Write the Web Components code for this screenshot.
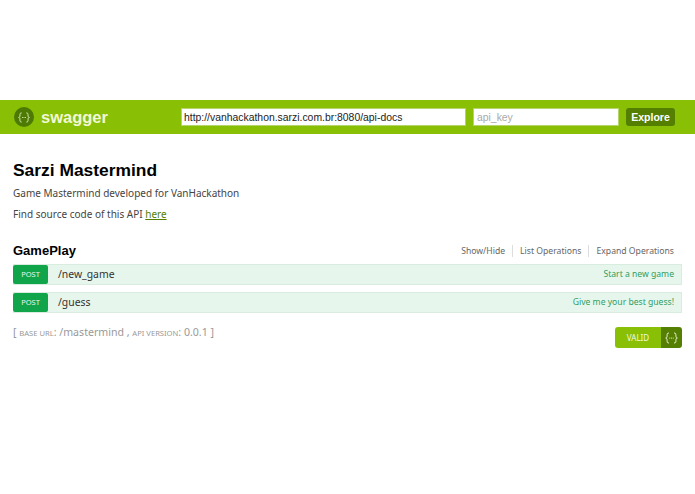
<!DOCTYPE html>
<html><head><meta charset="utf-8"><title>Swagger UI</title>
<style>
html,body{margin:0;padding:0;background:#fff}
body{font-family:"Noto Sans","Open Sans",sans-serif;color:#333}
api-info p{margin:0 0 6px;font:400 10px/15px "Noto Sans",sans-serif;color:#444}
api-info a{color:#547f00}
</style></head>
<body>
<swagger-app>
  <swagger-header slot="header"></swagger-header>
  <api-info title-text="Sarzi Mastermind">
    <p>Game Mastermind developed for VanHackathon</p>
    <p>Find source code of this API <a href="#">here</a></p>
  </api-info>
  <api-resource name="GamePlay">
    <api-op path="/new_game" summary="Start a new game"></api-op>
    <api-op path="/guess" summary="Give me your best guess!"></api-op>
  </api-resource>
  <api-footer></api-footer>
</swagger-app>
<script>
const braceSvg=(c,w,h)=>`<svg width="${w}" height="${h}" viewBox="0 0 14 12" fill="none" stroke="${c}" stroke-width="1" stroke-linecap="round"><path d="M4 1C2.6 1 2.6 2 2.6 3.5S2.4 5.7 1.2 6C2.4 6.3 2.6 7 2.6 8.5S2.6 11 4 11M10 1c1.4 0 1.4 1 1.4 2.5S11.6 5.7 12.8 6c-1.2.3-1.4 1-1.4 2.5S11.4 11 10 11"/><path d="M5.3 6h.01M7 6h.01M8.7 6h.01" stroke-width="1.1"/></svg>`;
function def(name,html){
  customElements.define(name,class extends HTMLElement{
    constructor(){super();this.attachShadow({mode:'open'});if(typeof html!=='function')this.shadowRoot.innerHTML=html;}
    connectedCallback(){if(typeof html==='function')this.shadowRoot.innerHTML=html(this);}
  });
}
def('swagger-app',`<style>:host{display:block;padding-top:100px}
.w{padding:0 13px}</style>
<slot name="header"></slot><div class="w"><slot></slot></div>`);
def('swagger-header',`<style>
:host{display:flex;align-items:center;height:34px;background:#89bf04}
.logo{width:20px;height:20px;border-radius:50%;background:#4c7a02;display:flex;align-items:center;justify-content:center;margin-left:14px;flex:none}
.name{font:700 16.5px "Liberation Sans",sans-serif;color:#f2f8d8;margin-left:7px;width:67px;flex:none;white-space:nowrap}
input{box-sizing:border-box;height:18px;border:1px solid #b5d46b;background:#fff;padding:0 2px;font:10.4px "Liberation Sans",sans-serif;color:#222;outline:0;border-radius:0;margin:0;flex:none}
input::placeholder{color:#aaa;opacity:1}
#u{width:285px;margin-left:73px}
#k{width:146px;margin-left:7px;padding-left:3px}
.x{margin-left:7px;width:49px;height:18px;border-radius:3px;background:#547f00;color:#fff;font:700 10.5px "Liberation Sans",sans-serif;display:flex;align-items:center;justify-content:center;flex:none}
</style>
<span class="logo">${braceSvg('#e8f3c5',14,11)}</span><span class="name">swagger</span>
<input id="u" value="http://vanhackathon.sarzi.com.br:8080/api-docs"><input id="k" placeholder="api_key"><span class="x">Explore</span>`);
def('api-info',t=>`<style>
:host{display:block;padding-top:27px}
h1{margin:0;font:700 17.4px/19px "Liberation Sans",sans-serif;color:#000}
.d{margin-top:6px}
</style><h1>${t.getAttribute('title-text')}</h1><div class="d"><slot></slot></div>`);
def('api-resource',t=>`<style>
:host{display:block;margin-top:20px}
.h{display:flex;align-items:center;justify-content:space-between;height:18px}
h2{margin:0;font:700 13px/18px "Liberation Sans",sans-serif;color:#000}
.l{display:flex;font:400 8.65px/12px "Noto Sans",sans-serif;color:#666;padding-right:8px}
.l span{padding:0 7px;border-right:1px solid #ddd}
.l span:last-child{border:0;padding-right:0}
.o{display:flex;flex-direction:column;gap:7px;margin-top:4px}
</style><div class="h"><h2>${t.getAttribute('name')}</h2><div class="l"><span>Show/Hide</span><span>List Operations</span><span>Expand Operations</span></div></div><div class="o"><slot></slot></div>`);
def('api-op',t=>`<style>
:host{display:flex;align-items:center;height:21px;box-sizing:border-box;background:#e7f6ec;border:1px solid #d8ece0;border-left:0}
.m{width:35px;height:19px;background:#10a54a;color:#e8f6ec;font:400 7.5px/19px "Noto Sans",sans-serif;text-align:center;border-radius:2px;flex:none}
.p{margin:0 0 2px 10px;font:400 10.4px "Noto Sans",sans-serif;color:#333}
.s{margin:0 0 1px auto;padding-right:7px;font:400 8.6px "Noto Sans",sans-serif;color:#2f9e63}
</style><span class="m">POST</span><span class="p">${t.getAttribute('path')}</span><span class="s">${t.getAttribute('summary')}</span>`);
def('api-footer',`<style>
:host{display:flex;justify-content:space-between;align-items:flex-start;margin-top:12px}
.t{font:400 10.6px/15px "Noto Sans",sans-serif;color:#999}
small{font-size:7.6px;text-transform:uppercase}
.v{display:flex;width:67px;height:21px;border-radius:3px;overflow:hidden;margin-top:2px}
.a{flex:1;background:#89bf04;color:#f4f9e2;font:400 8px/21px "Noto Sans",sans-serif;text-align:center}
.c{width:21px;background:#547f00;display:flex;align-items:center;justify-content:center}
</style><div class="t">[ <small>base url</small>: /mastermind , <small>api version</small>: 0.0.1 ]</div>
<div class="v"><span class="a">VALID</span><span class="c">${braceSvg('#f4f9e2',15,12)}</span></div>`);
</script>
</body></html>
